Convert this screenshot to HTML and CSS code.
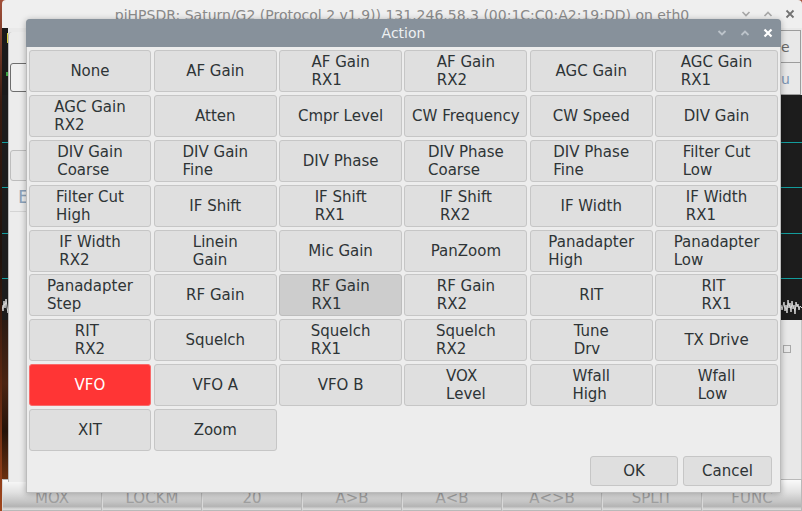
FILE: index.html
```html
<!DOCTYPE html>
<html>
<head>
<meta charset="utf-8">
<title>Action</title>
<link rel="stylesheet" href="styles.css">
</head>
<body>
<div class="desktop">
  <div class="main-win">
    <div class="main-title">
      <div class="mt-side"></div>
      <div class="mt-text">piHPSDR: Saturn/G2 (Protocol 2 v1.9)) 131.246.58.3 (00:1C:C0:A2:19:DD) on eth0</div>
      <div class="mt-side mt-ctrls">
        <span class="wc"><svg width="10" height="6" viewBox="0 0 10 6"><path d="M1.5 1 L5 4.5 L8.5 1" fill="none" stroke="#a9a9a9" stroke-width="1.7"/></svg></span>
        <span class="wc"><svg width="10" height="6" viewBox="0 0 10 6"><path d="M1.5 5 L5 1.5 L8.5 5" fill="none" stroke="#a9a9a9" stroke-width="1.7"/></svg></span>
        <span class="wc"><svg width="10" height="10" viewBox="0 0 10 10"><path d="M1.5 1.5 L8.5 8.5 M8.5 1.5 L1.5 8.5" fill="none" stroke="#727272" stroke-width="1.8"/></svg></span>
      </div>
    </div>
    <div class="main-body">
      <div class="row-top">
        <div class="strip strip-top"><span class="mk-y"></span><span class="mk-g"></span></div>
        <div class="fill"></div>
        <div class="edge-col">
          <div class="edge-btn">e</div>
          <div class="edge-btn blue">u</div>
        </div>
      </div>
      <div class="row-pan">
        <svg class="wave" width="800" height="25" viewBox="0 0 800 25"><polyline fill="none" stroke="#d8d8d8" stroke-width="1" points="0,12 1,18 2,8 3,15 4,6 5,14 6,20 7,11 8,16 10,13 20,14 770,14 776,16 779,12 780,17 782,9 783,18 784,12 785,20 786,7 787,15 788,10 789,19 790,8 791,16 792,12 793,21 794,9 795,14 796,11 797,17 798,13 800,15"/></svg>
      </div>
      <div class="row-low">
        <div class="strip strip-low"></div>
        <div class="fill"></div>
        <div class="edge-col edge-low"><span class="chk"></span></div>
      </div>
    </div>
    <div class="bbar">
      <div class="bb">MOX</div>
      <div class="bb">LOCKM</div>
      <div class="bb">20</div>
      <div class="bb">A&gt;B</div>
      <div class="bb">A&lt;B</div>
      <div class="bb">A&lt;&gt;B</div>
      <div class="bb">SPLIT</div>
      <div class="bb">FUNC</div>
    </div>
  </div>

  <div class="back-win">
    <div class="bw-box1"></div>
    <div class="bw-box2"></div>
    <div class="bw-e">E</div>
    <div class="bw-sep"></div>
  </div>

  <div class="dialog">
    <div class="dlg-title">
      <div></div>
      <div class="dlg-title-text">Action</div>
      <div class="dlg-ctrls">
        <span class="dc"><svg width="10" height="6" viewBox="0 0 10 6"><path d="M1.5 1 L5 4.5 L8.5 1" fill="none" stroke="#bcc3ca" stroke-width="1.8"/></svg></span>
        <span class="dc"><svg width="10" height="6" viewBox="0 0 10 6"><path d="M1.5 5 L5 1.5 L8.5 5" fill="none" stroke="#bcc3ca" stroke-width="1.8"/></svg></span>
        <span class="dc"><svg width="10" height="10" viewBox="0 0 10 10"><path d="M1.5 1.5 L8.5 8.5 M8.5 1.5 L1.5 8.5" fill="none" stroke="#ffffff" stroke-width="2.2"/></svg></span>
      </div>
    </div>
    <div class="grid">
      <div class="btn"><span class="lbl">None</span></div>
      <div class="btn"><span class="lbl">AF Gain</span></div>
      <div class="btn"><span class="lbl">AF Gain<br>RX1</span></div>
      <div class="btn"><span class="lbl">AF Gain<br>RX2</span></div>
      <div class="btn"><span class="lbl">AGC Gain</span></div>
      <div class="btn"><span class="lbl">AGC Gain<br>RX1</span></div>

      <div class="btn"><span class="lbl">AGC Gain<br>RX2</span></div>
      <div class="btn"><span class="lbl">Atten</span></div>
      <div class="btn"><span class="lbl">Cmpr Level</span></div>
      <div class="btn"><span class="lbl">CW Frequency</span></div>
      <div class="btn"><span class="lbl">CW Speed</span></div>
      <div class="btn"><span class="lbl">DIV Gain</span></div>

      <div class="btn"><span class="lbl">DIV Gain<br>Coarse</span></div>
      <div class="btn"><span class="lbl">DIV Gain<br>Fine</span></div>
      <div class="btn"><span class="lbl">DIV Phase</span></div>
      <div class="btn"><span class="lbl">DIV Phase<br>Coarse</span></div>
      <div class="btn"><span class="lbl">DIV Phase<br>Fine</span></div>
      <div class="btn"><span class="lbl">Filter Cut<br>Low</span></div>

      <div class="btn"><span class="lbl">Filter Cut<br>High</span></div>
      <div class="btn"><span class="lbl">IF Shift</span></div>
      <div class="btn"><span class="lbl">IF Shift<br>RX1</span></div>
      <div class="btn"><span class="lbl">IF Shift<br>RX2</span></div>
      <div class="btn"><span class="lbl">IF Width</span></div>
      <div class="btn"><span class="lbl">IF Width<br>RX1</span></div>

      <div class="btn"><span class="lbl">IF Width<br>RX2</span></div>
      <div class="btn"><span class="lbl">Linein<br>Gain</span></div>
      <div class="btn"><span class="lbl">Mic Gain</span></div>
      <div class="btn"><span class="lbl">PanZoom</span></div>
      <div class="btn"><span class="lbl">Panadapter<br>High</span></div>
      <div class="btn"><span class="lbl">Panadapter<br>Low</span></div>

      <div class="btn"><span class="lbl">Panadapter<br>Step</span></div>
      <div class="btn"><span class="lbl">RF Gain</span></div>
      <div class="btn hover"><span class="lbl">RF Gain<br>RX1</span></div>
      <div class="btn"><span class="lbl">RF Gain<br>RX2</span></div>
      <div class="btn"><span class="lbl">RIT</span></div>
      <div class="btn"><span class="lbl">RIT<br>RX1</span></div>

      <div class="btn"><span class="lbl">RIT<br>RX2</span></div>
      <div class="btn"><span class="lbl">Squelch</span></div>
      <div class="btn"><span class="lbl">Squelch<br>RX1</span></div>
      <div class="btn"><span class="lbl">Squelch<br>RX2</span></div>
      <div class="btn"><span class="lbl">Tune<br>Drv</span></div>
      <div class="btn"><span class="lbl">TX Drive</span></div>

      <div class="btn active"><span class="lbl">VFO</span></div>
      <div class="btn"><span class="lbl">VFO A</span></div>
      <div class="btn"><span class="lbl">VFO B</span></div>
      <div class="btn"><span class="lbl">VOX<br>Level</span></div>
      <div class="btn"><span class="lbl">Wfall<br>High</span></div>
      <div class="btn"><span class="lbl">Wfall<br>Low</span></div>

      <div class="btn"><span class="lbl">XIT</span></div>
      <div class="btn"><span class="lbl">Zoom</span></div>
    </div>
    <div class="dlg-foot">
      <div class="btn fbtn ok">OK</div>
      <div class="btn fbtn cancel">Cancel</div>
    </div>
  </div>
</div>
</body>
</html>
```

FILE: styles.css
```css
html, body {
  margin: 0;
  padding: 0;
}

body {
  width: 802px;
  height: 511px;
  overflow: hidden;
  font-family: "DejaVu Sans", "Liberation Sans", sans-serif;
  background: linear-gradient(#a2503a 0%, #3a1c10 20%, #1e120c 50%, #6a2c12 80%, #a0461c 100%);
}

.desktop {
  position: relative;
  width: 802px;
  height: 511px;
  overflow: hidden;
}

/* ---------- main window (behind) ---------- */
.main-win {
  position: absolute;
  left: 2px;
  top: 0;
  width: 800px;
  height: 511px;
  display: flex;
  flex-direction: column;
}

.main-title {
  flex: none;
  height: 28px;
  background: #efefef;
  display: grid;
  grid-template-columns: 1fr auto 1fr;
  align-items: center;
  border-radius: 4px 4px 0 0;
}

.mt-text {
  align-self: start;
  padding-top: 7px;
  font-size: 14px;
  line-height: normal;
  color: #8a8a8a;
  white-space: nowrap;
}

.mt-ctrls {
  display: flex;
  justify-content: flex-end;
  gap: 6px;
  padding-right: 4px;
}

.wc {
  width: 16px;
  height: 16px;
  display: flex;
  align-items: center;
  justify-content: center;
}

.main-body {
  flex: 1;
  display: flex;
  flex-direction: column;
  background: #1c1c1c;
}

.row-top {
  height: 67px;
  display: flex;
}

.strip {
  width: 6px;
  flex: none;
}

.strip-top {
  background: #1a1a1a;
  display: flex;
  flex-direction: column;
  align-items: flex-end;
}

.mk-y {
  width: 1px;
  height: 10px;
  margin-top: 5px;
  background: #d8d040;
}

.mk-g {
  width: 2px;
  height: 4px;
  margin-top: 29px;
  background: #3aa040;
}

.fill {
  flex: 1;
  background: #e9e9e9;
}

.edge-col {
  width: 21px;
  flex: none;
  background: #e8e8e8;
  display: flex;
  flex-direction: column;
  padding-top: 2px;
  box-sizing: border-box;
}

.edge-btn {
  height: 33px;
  box-sizing: border-box;
  border: 1px solid #9c9c9c;
  border-left: none;
  margin-right: 1px;
  font-size: 14px;
  color: #6a6a6a;
  display: flex;
  align-items: center;
  padding-left: 0;
}

.edge-btn + .edge-btn {
  border-top: none;
  height: 32px;
}

.edge-btn.blue {
  color: #7b96b6;
}

.row-pan {
  height: 225px;
  display: flex;
  flex-direction: column;
  justify-content: flex-end;
  background:
    linear-gradient(#139c9c, #139c9c) 0 47px / 100% 1px no-repeat,
    linear-gradient(#139c9c, #139c9c) 0 92px / 100% 1px no-repeat,
    linear-gradient(#139c9c, #139c9c) 0 138px / 100% 1px no-repeat,
    linear-gradient(#139c9c, #139c9c) 0 183px / 100% 1px no-repeat,
    #1c1c1c;
}

.wave {
  display: block;
  margin-bottom: 2px;
}

.row-low {
  flex: 1;
  display: flex;
}

.strip-low {
  background: linear-gradient(#2a1a12, #4a2412 40%, #241208 70%, #6a3010);
}

.edge-low {
  padding-top: 25px;
  padding-left: 2px;
  border-right: 1px solid #c4c4c4;
}

.chk {
  display: block;
  width: 6px;
  height: 6px;
  border: 1px solid #a8a8a8;
}

.bbar {
  flex: none;
  height: 32px;
  display: flex;
}

.bb {
  flex: 1;
  box-sizing: border-box;
  border: 1px solid #b9b9b9;
  border-left-color: #d8d8d8;
  background: linear-gradient(#fafafa 0%, #e2e2e2 40%, #c2c2c2 75%, #b4b4b4 88%, #dadada 97%);
  color: #9e9e9e;
  font-size: 15px;
  display: flex;
  align-items: center;
  justify-content: center;
  padding-top: 5px;
}

/* ---------- window behind the dialog ---------- */
.back-win {
  position: absolute;
  left: 8px;
  top: 32px;
  width: 300px;
  height: 450px;
  box-sizing: border-box;
  background: #ececec;
  border-left: 1px solid #b8b8b8;
  border-radius: 4px 0 0 0;
  display: flex;
  flex-direction: column;
  padding-left: 1px;
}

.bw-box1 {
  margin-top: 31px;
  height: 29px;
  box-sizing: border-box;
  border: 1px solid #6e6e6e;
  border-radius: 3px;
  background: #f0f0f0;
}

.bw-box2 {
  margin-top: 58px;
  height: 31px;
  box-sizing: border-box;
  border: 1px solid #bdbdbd;
  border-radius: 3px;
  background: #e6e6e6;
}

.bw-e {
  margin-top: 5px;
  margin-left: 8px;
  font-size: 18px;
  color: #8ca2ba;
}

.bw-sep {
  margin-top: 4px;
  border-top: 1px solid #d4d4d4;
}

/* ---------- Action dialog ---------- */
.dialog {
  position: absolute;
  left: 26px;
  top: 19px;
  width: 755px;
  height: 474px;
  background: #ededed;
  border-radius: 4px 4px 0 0;
  box-shadow: inset 0 0 0 1px #bcbcbc, 0 1px 6px rgba(0, 0, 0, 0.3);
  display: flex;
  flex-direction: column;
}

.dlg-title {
  flex: none;
  height: 28px;
  background: #87919b;
  border-radius: 4px 4px 0 0;
  display: grid;
  grid-template-columns: 1fr auto 1fr;
  align-items: center;
}

.dlg-title-text {
  font-size: 14px;
  color: #eef0f2;
}

.dlg-ctrls {
  display: flex;
  justify-content: flex-end;
  gap: 3px;
  padding-right: 3px;
}

.dc {
  width: 20px;
  height: 20px;
  display: flex;
  align-items: center;
  justify-content: center;
}

.grid {
  display: grid;
  grid-template-columns: repeat(6, 1fr);
  grid-auto-rows: 42px;
  column-gap: 2.4px;
  row-gap: 2.9px;
  padding: 3px 3px 0 2.5px;
}

.btn {
  box-sizing: border-box;
  border: 1px solid #c6c6c6;
  border-radius: 3px;
  background: #dfdfdf;
  color: #2e3436;
  font-size: 15px;
  line-height: 18px;
  display: flex;
  align-items: center;
  justify-content: center;
}

.lbl {
  text-align: left;
  white-space: nowrap;
}

.btn.hover {
  background: #cdcdcd;
  border-color: #bdbdbd;
}

.btn.active {
  background: #ff3535;
  border-color: #f86a6a;
  color: #ffffff;
}

.dlg-foot {
  margin-top: auto;
  display: flex;
  justify-content: flex-end;
  gap: 5px;
  padding: 0 9px 7px 0;
}

.fbtn {
  height: 30px;
}

.ok {
  width: 88px;
}

.cancel {
  width: 89px;
}
```
